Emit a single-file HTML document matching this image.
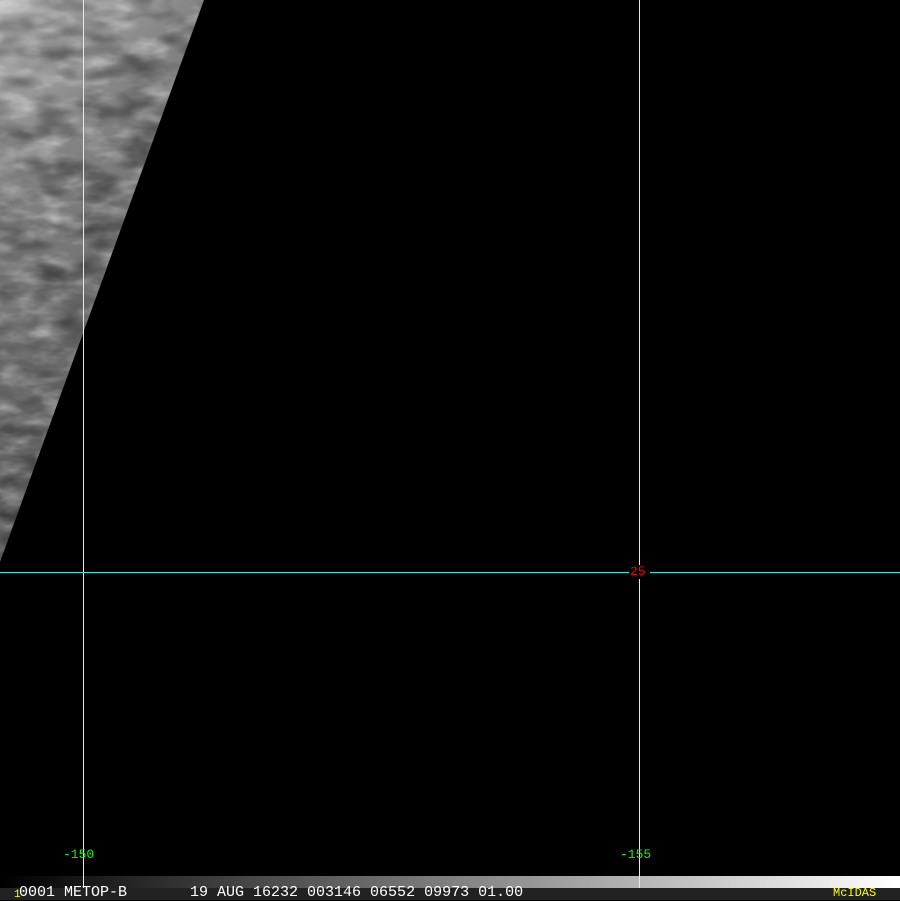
<!DOCTYPE html>
<html><head><meta charset="utf-8"><style>
html,body{margin:0;padding:0;background:#000;width:900px;height:900px;overflow:hidden}
.t{position:absolute;font-family:"Liberation Mono",monospace;font-size:13px;line-height:12px;white-space:pre}
</style></head><body>
<svg width="900" height="900" style="position:absolute;left:0;top:0" xmlns="http://www.w3.org/2000/svg">
<defs>
<clipPath id="sw"><polygon points="0,0 204,0 0,562"/></clipPath>
<linearGradient id="g" x1="0" y1="0" x2="0.35" y2="1">
<stop offset="0" stop-color="#b8b8b8"/><stop offset="0.3" stop-color="#858585"/><stop offset="1" stop-color="#505050"/>
</linearGradient>
<filter id="n" x="0" y="0" width="100%" height="100%">
<feTurbulence type="fractalNoise" baseFrequency="0.03 0.07" numOctaves="3" seed="4"/>
<feColorMatrix type="matrix" values="0 0 0 0 1  0 0 0 0 1  0 0 0 0 1  1.8 0 0 0 -0.75"/>
</filter>
<filter id="d" x="0" y="0" width="100%" height="100%">
<feTurbulence type="fractalNoise" baseFrequency="0.025 0.05" numOctaves="2" seed="9"/>
<feColorMatrix type="matrix" values="0 0 0 0 0  0 0 0 0 0  0 0 0 0 0  1.8 0 0 0 -0.7"/>
</filter>
<linearGradient id="bar" x1="0" x2="1">
<stop offset="0" stop-color="#000"/><stop offset="1" stop-color="#fff"/>
</linearGradient>
</defs>
<g clip-path="url(#sw)">
<rect x="0" y="0" width="210" height="570" fill="url(#g)"/>
<rect x="0" y="0" width="210" height="570" filter="url(#n)" opacity="0.5"/>
<rect x="0" y="0" width="210" height="570" filter="url(#d)" opacity="0.5"/>
</g>
<rect x="0" y="876" width="900" height="12" fill="url(#bar)"/>
<rect x="0" y="888" width="900" height="12" fill="#222"/>
<line x1="83.5" y1="0" x2="83.5" y2="888" stroke="#bfe" stroke-width="1"/>
<line x1="639.5" y1="0" x2="639.5" y2="565" stroke="#bfe" stroke-width="1"/>
<line x1="639.5" y1="579" x2="639.5" y2="888" stroke="#bfe" stroke-width="1"/>
<line x1="0" y1="572.5" x2="629" y2="572.5" stroke="#2ee" stroke-width="1"/>
<line x1="650" y1="572.5" x2="900" y2="572.5" stroke="#2ee" stroke-width="1"/>
</svg>
<div class="t" style="left:630px;top:566px;color:#f00">25</div>
<div class="t" style="left:63px;top:849px;color:#0f0">-150</div>
<div class="t" style="left:620px;top:849px;color:#0f0">-155</div>
<div class="t" style="left:14px;top:889px;color:#ff0;font-size:11px">1</div>
<div class="t" style="left:19px;top:887px;color:#fff;font-size:15px">0001 METOP-B       19 AUG 16232 003146 06552 09973 01.00</div>
<div class="t" style="left:833px;top:887px;color:#ff0;font-size:12px">McIDAS</div>
</body></html>
